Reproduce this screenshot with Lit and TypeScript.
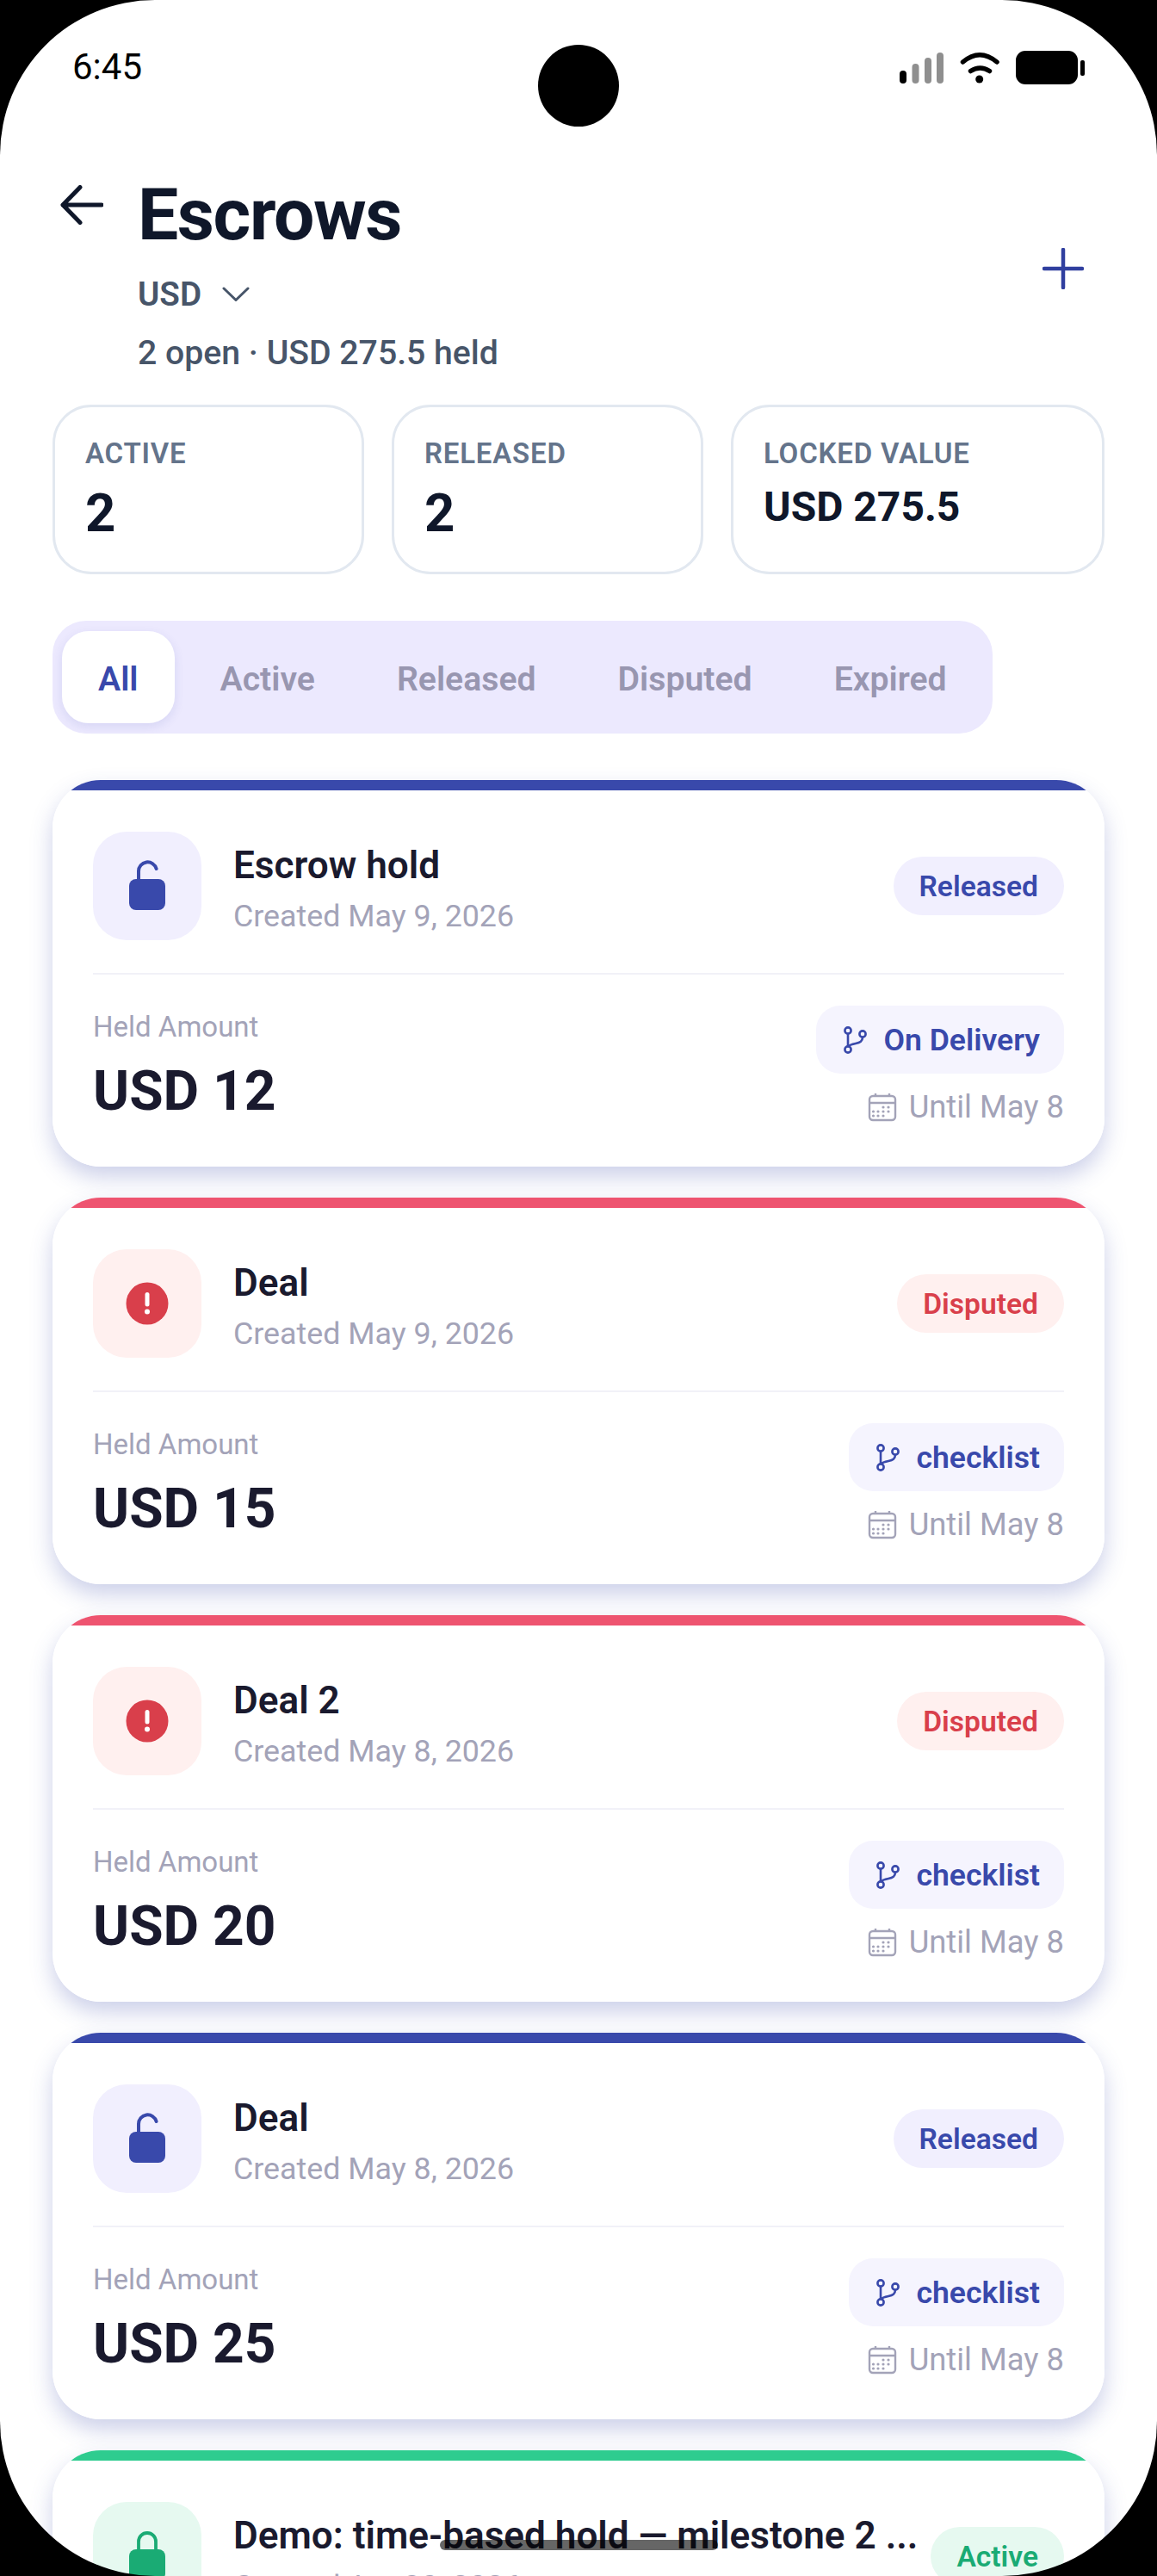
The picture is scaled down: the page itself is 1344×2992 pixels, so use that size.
import { LitElement, html, css, svg, TemplateResult } from 'lit';
import { customElement } from 'lit/decorators.js';

type Tone = 'released' | 'disputed' | 'active';

interface Escrow {
  tone: Tone;
  title: string;
  created: string;
  status: string;
  amount?: string;
  type?: string;
}

const ESCROWS: Escrow[] = [
  { tone: 'released', title: 'Escrow hold', created: 'Created May 9, 2026', status: 'Released', amount: 'USD 12', type: 'On Delivery' },
  { tone: 'disputed', title: 'Deal', created: 'Created May 9, 2026', status: 'Disputed', amount: 'USD 15', type: 'checklist' },
  { tone: 'disputed', title: 'Deal 2', created: 'Created May 8, 2026', status: 'Disputed', amount: 'USD 20', type: 'checklist' },
  { tone: 'released', title: 'Deal', created: 'Created May 8, 2026', status: 'Released', amount: 'USD 25', type: 'checklist' },
  { tone: 'active', title: 'Demo: time-based hold — milestone 2 ...', created: 'Created Apr 30, 2026', status: 'Active' },
];

const TABS = ['All', 'Active', 'Released', 'Disputed', 'Expired'];

const lockOpen = svg`<svg width="56" height="64" viewBox="0 0 56 64"><path d="M18 26V15a10.5 10.500 0 0 1 20.600-3" fill="none" stroke="currentColor" stroke-width="4" stroke-linecap="round"/><rect x="7" y="24" width="42" height="36" rx="8" fill="currentColor"/></svg>`;
const lockClosed = svg`<svg width="56" height="64" viewBox="0 0 56 64"><path d="M18 26V15a10 10 0 0 1 20 0v11" fill="none" stroke="currentColor" stroke-width="3.800"/><rect x="7" y="24" width="42" height="36" rx="8" fill="currentColor"/></svg>`;
const alertIcon = svg`<svg width="56" height="56" viewBox="0 0 56 56"><circle cx="28" cy="28" r="24.500" fill="currentColor"/><rect x="25.500" y="15" width="5" height="16.500" rx="2.500" fill="#fff"/><circle cx="28" cy="37.500" r="3" fill="#fff"/></svg>`;
const forkIcon = svg`<svg width="30" height="34" viewBox="0 0 30 34" fill="none" stroke="currentColor" stroke-width="2.600"><circle cx="7" cy="6" r="3.600"/><circle cx="7" cy="28" r="3.600"/><circle cx="24" cy="10" r="3.600"/><path d="M7 9.600v14.800M24 13.600c0 5-3 6.400-8 7.400-4 .8-7 1.400-8.200 3.400"/></svg>`;
const calendarIcon = svg`<svg width="34" height="34" viewBox="0 0 34 34" fill="none" stroke="currentColor" stroke-width="2.400"><rect x="2" y="4" width="30" height="28" rx="4"/><path d="M2 12h30M9 1v4M25 1v4"/><g fill="currentColor" stroke="none"><circle cx="18" cy="17" r="1.600"/><circle cx="24" cy="17" r="1.600"/><circle cx="6.500" cy="22" r="1.600"/><circle cx="12" cy="22" r="1.600"/><circle cx="18" cy="22" r="1.600"/><circle cx="24" cy="22" r="1.600"/><circle cx="6.500" cy="27" r="1.600"/><circle cx="12" cy="27" r="1.600"/><circle cx="18" cy="27" r="1.600"/></g></svg>`;

@customElement('app-root')
export class AppRoot extends LitElement {
  static styles = css`
    :host {
      display: block;
      position: relative;
      width: 1344px;
      height: 2992px;
      overflow: hidden;
      background: #fff;
      font-family: Roboto, 'Liberation Sans', sans-serif;
      color: #0f172a;
    }

    /* device frame, lies over the page */
    .frame {
      position: absolute;
      inset: 0;
      border-radius: 180px;
      box-shadow: 0 0 0 200px #000;
      pointer-events: none;
      z-index: 5;
    }
    .camera {
      position: absolute;
      left: 625px;
      top: 52px;
      width: 94px;
      height: 95px;
      border-radius: 50%;
      background: #000;
      z-index: 6;
    }
    .home {
      position: absolute;
      left: 511px;
      top: 2950px;
      width: 323px;
      height: 12px;
      border-radius: 6px;
      background: rgba(0, 0, 0, 0.6);
      z-index: 6;
    }

    .status {
      height: 168px;
      padding: 53px 84px 0 84px;
      box-sizing: border-box;
      display: flex;
      justify-content: space-between;
      align-items: flex-start;
      font-size: 42px;
      line-height: 50px;
      color: #000;
    }
    .status svg {
      display: block;
      margin-top: 6px;
    }

    .header {
      display: flex;
      padding: 0 85px 0 70px;
      height: 270px;
      box-sizing: border-box;
    }
    .back {
      width: 90px;
      flex: none;
      padding-top: 47px;
    }
    .back svg {
      display: block;
    }
    .head-main {
      flex: 1;
      padding-top: 32px;
    }
    .head-main h1 {
      margin: 0;
      font-size: 84px;
      line-height: 100px;
      font-weight: 700;
      letter-spacing: -1.4px;
      color: #0f172a;
    }
    .currency {
      display: flex;
      align-items: center;
      gap: 24px;
      margin-top: 14px;
      font-size: 38.6px;
      line-height: 56px;
      font-weight: 600;
      color: #475569;
    }
    .summary {
      margin-top: 12px;
      font-size: 39.2px;
      line-height: 56px;
      font-weight: 500;
      color: #475569;
    }
    .add {
      padding-top: 120px;
    }
    .add svg {
      display: block;
    }

    .stats {
      display: grid;
      grid-template-columns: 362px 362px 1fr;
      gap: 32px;
      margin: 32px 61px 0;
      height: 197px;
    }
    .stat {
      box-sizing: border-box;
      border: 3px solid #e2e8f0;
      border-radius: 45px;
      padding: 34px 35px;
    }
    .stat .label {
      font-size: 33px;
      line-height: 40px;
      font-weight: 600;
      letter-spacing: 0.8px;
      color: #64748b;
    }
    .stat .value {
      margin-top: 17px;
      font-size: 61.6px;
      line-height: 64px;
      font-weight: 700;
      color: #0f172a;
    }
    .stat .value.small {
      margin-top: 13px;
      font-size: 48px;
      line-height: 58px;
    }

    .tabbar {
      height: 239px;
    }
    .tabs {
      display: inline-flex;
      gap: 11px;
      margin: 54px 0 0 61px;
      padding: 12px 11px;
      background: #ece9fe;
      border-radius: 39px;
    }
    .tab {
      padding: 0 42px;
      height: 107px;
      line-height: 112px;
      font-size: 39.2px;
      font-weight: 600;
      color: #9896b0;
      border-radius: 31px;
    }
    .tab.on {
      background: #fff;
      color: #3949ab;
      box-shadow: 0 4px 12px rgba(57, 73, 171, 0.12);
    }

    .list {
      display: flex;
      flex-direction: column;
      gap: 36px;
      margin: 0 61px;
    }
    .shadow {
      border-radius: 56px;
      box-shadow: 0 12px 26px rgba(57, 73, 171, 0.26);
      background: #fff;
    }
    .card {
      background: #fff;
      border-radius: 56px;
      overflow: hidden;
      height: 449px;
      box-sizing: border-box;
    }
    .bar {
      height: 12px;
    }
    .released .bar { background: #3949ab; }
    .disputed .bar { background: #ee5470; }
    .active .bar { background: #2ecc8f; }

    .top {
      display: flex;
      align-items: center;
      gap: 37px;
      margin: 48px 47px 0;
      padding-bottom: 38px;
      border-bottom: 2px solid #f1f1f8;
    }
    .icon {
      flex: none;
      width: 126px;
      height: 126px;
      border-radius: 39px;
      display: flex;
      align-items: center;
      justify-content: center;
    }
    .released .icon { background: #f1effe; color: #3949ab; }
    .disputed .icon { background: #fff0ef; color: #d93f4b; }
    .active .icon { background: #e6f9f0; color: #1aab74; }
    .titles {
      flex: 1;
      min-width: 0;
      padding-top: 7px;
    }
    .title {
      font-size: 44.1px;
      line-height: 54px;
      font-weight: 600;
      color: #1a1a2e;
      white-space: nowrap;
    }
    .sub {
      margin-top: 9px;
      font-size: 35.8px;
      line-height: 46px;
      color: #a3a3b8;
    }
    .badge {
      flex: none;
      height: 68px;
      line-height: 70px;
      padding: 0 30px;
      border-radius: 34px;
      font-size: 33.6px;
      font-weight: 600;
    }
    .released .badge { background: #f1effe; color: #3949ab; }
    .disputed .badge { background: #fff0ef; color: #d93f4b; }
    .active .badge { background: #e6f9f0; color: #1aab74; }

    .bottom {
      display: flex;
      justify-content: space-between;
      margin: 36px 47px 0;
    }
    .held .label {
      margin-top: 3px;
      font-size: 33px;
      line-height: 44px;
      color: #a3a3b8;
    }
    .held .amount {
      margin-top: 13px;
      font-size: 64px;
      line-height: 80px;
      font-weight: 700;
      color: #1a1a2e;
    }
    .meta {
      display: flex;
      flex-direction: column;
      align-items: flex-end;
    }
    .chip {
      display: flex;
      align-items: center;
      gap: 18px;
      height: 79px;
      padding: 0 28px 0 30px;
      border-radius: 28px;
      background: #f5f4fe;
      color: #3949ab;
      font-size: 35.6px;
      font-weight: 600;
    }
    .chip svg, .until svg {
      display: block;
    }
    .until {
      display: flex;
      align-items: center;
      gap: 14px;
      margin-top: 17px;
      font-size: 36.4px;
      line-height: 44px;
      color: #a3a3b8;
    }
  `;

  renderCard(e: Escrow): TemplateResult {
    const glyph = e.tone === 'released' ? lockOpen : e.tone === 'disputed' ? alertIcon : lockClosed;
    return html`
      <div class="shadow">
        <article class="card ${e.tone}">
          <div class="bar"></div>
          <div class="top">
            <div class="icon">${glyph}</div>
            <div class="titles">
              <div class="title">${e.title}</div>
              <div class="sub">${e.created}</div>
            </div>
            <div class="badge">${e.status}</div>
          </div>
          ${e.amount
            ? html`<div class="bottom">
                <div class="held">
                  <div class="label">Held Amount</div>
                  <div class="amount">${e.amount}</div>
                </div>
                <div class="meta">
                  <div class="chip">${forkIcon}${e.type}</div>
                  <div class="until">${calendarIcon}Until May 8</div>
                </div>
              </div>`
            : ''}
        </article>
      </div>
    `;
  }

  render(): TemplateResult {
    return html`
      <div class="status">
        <span>6:45</span>
        <svg width="215" height="40" viewBox="0 0 215 40">
          <rect x="0" y="23" width="8" height="15" rx="4" fill="#000"/>
          <rect x="14.500" y="15" width="8" height="23" rx="4" fill="#8f8f8f"/>
          <rect x="29" y="8" width="8" height="30" rx="4" fill="#8f8f8f"/>
          <rect x="43" y="2" width="8" height="36" rx="4" fill="#8f8f8f"/>
          <g fill="none" stroke="#000" stroke-width="5.500" stroke-linecap="round">
            <path d="M73.500 13Q93 -3.500 113 13"/>
            <path d="M82.500 23.500Q93.500 16.500 104.500 23.500"/>
          </g>
          <circle cx="92.700" cy="33" r="4.500" fill="#000"/>
          <rect x="135" y="0" width="72" height="39" rx="11" fill="#000"/>
          <rect x="210" y="11" width="5" height="18" rx="2" fill="#000"/>
        </svg>
      </div>

      <div class="header">
        <div class="back">
          <svg width="50" height="46" viewBox="0 0 50 46" fill="none" stroke="#0f172a" stroke-width="5" stroke-linecap="round" stroke-linejoin="round">
            <path d="M48 23H3M23 2.500L3 23l20 20.500"/>
          </svg>
        </div>
        <div class="head-main">
          <h1>Escrows</h1>
          <div class="currency">
            USD
            <svg width="32" height="18" viewBox="0 0 32 18" fill="none" stroke="#475569" stroke-width="3" stroke-linecap="round" stroke-linejoin="round"><path d="M2 2l14 13.500L30 2"/></svg>
          </div>
          <div class="summary">2 open · USD 275.5 held</div>
        </div>
        <div class="add">
          <svg width="48" height="48" viewBox="0 0 48 48" fill="none" stroke="#303f9f" stroke-width="4.500" stroke-linecap="round"><path d="M24 2v44M2 24h44"/></svg>
        </div>
      </div>

      <div class="stats">
        <div class="stat"><div class="label">ACTIVE</div><div class="value">2</div></div>
        <div class="stat"><div class="label">RELEASED</div><div class="value">2</div></div>
        <div class="stat"><div class="label">LOCKED VALUE</div><div class="value small">USD 275.5</div></div>
      </div>

      <div class="tabbar">
        <div class="tabs">
          ${TABS.map((t, i) => html`<div class="tab ${i === 0 ? 'on' : ''}">${t}</div>`)}
        </div>
      </div>

      <div class="list">${ESCROWS.map((e) => this.renderCard(e))}</div>

      <div class="frame"></div>
      <div class="camera"></div>
      <div class="home"></div>
    `;
  }
}
